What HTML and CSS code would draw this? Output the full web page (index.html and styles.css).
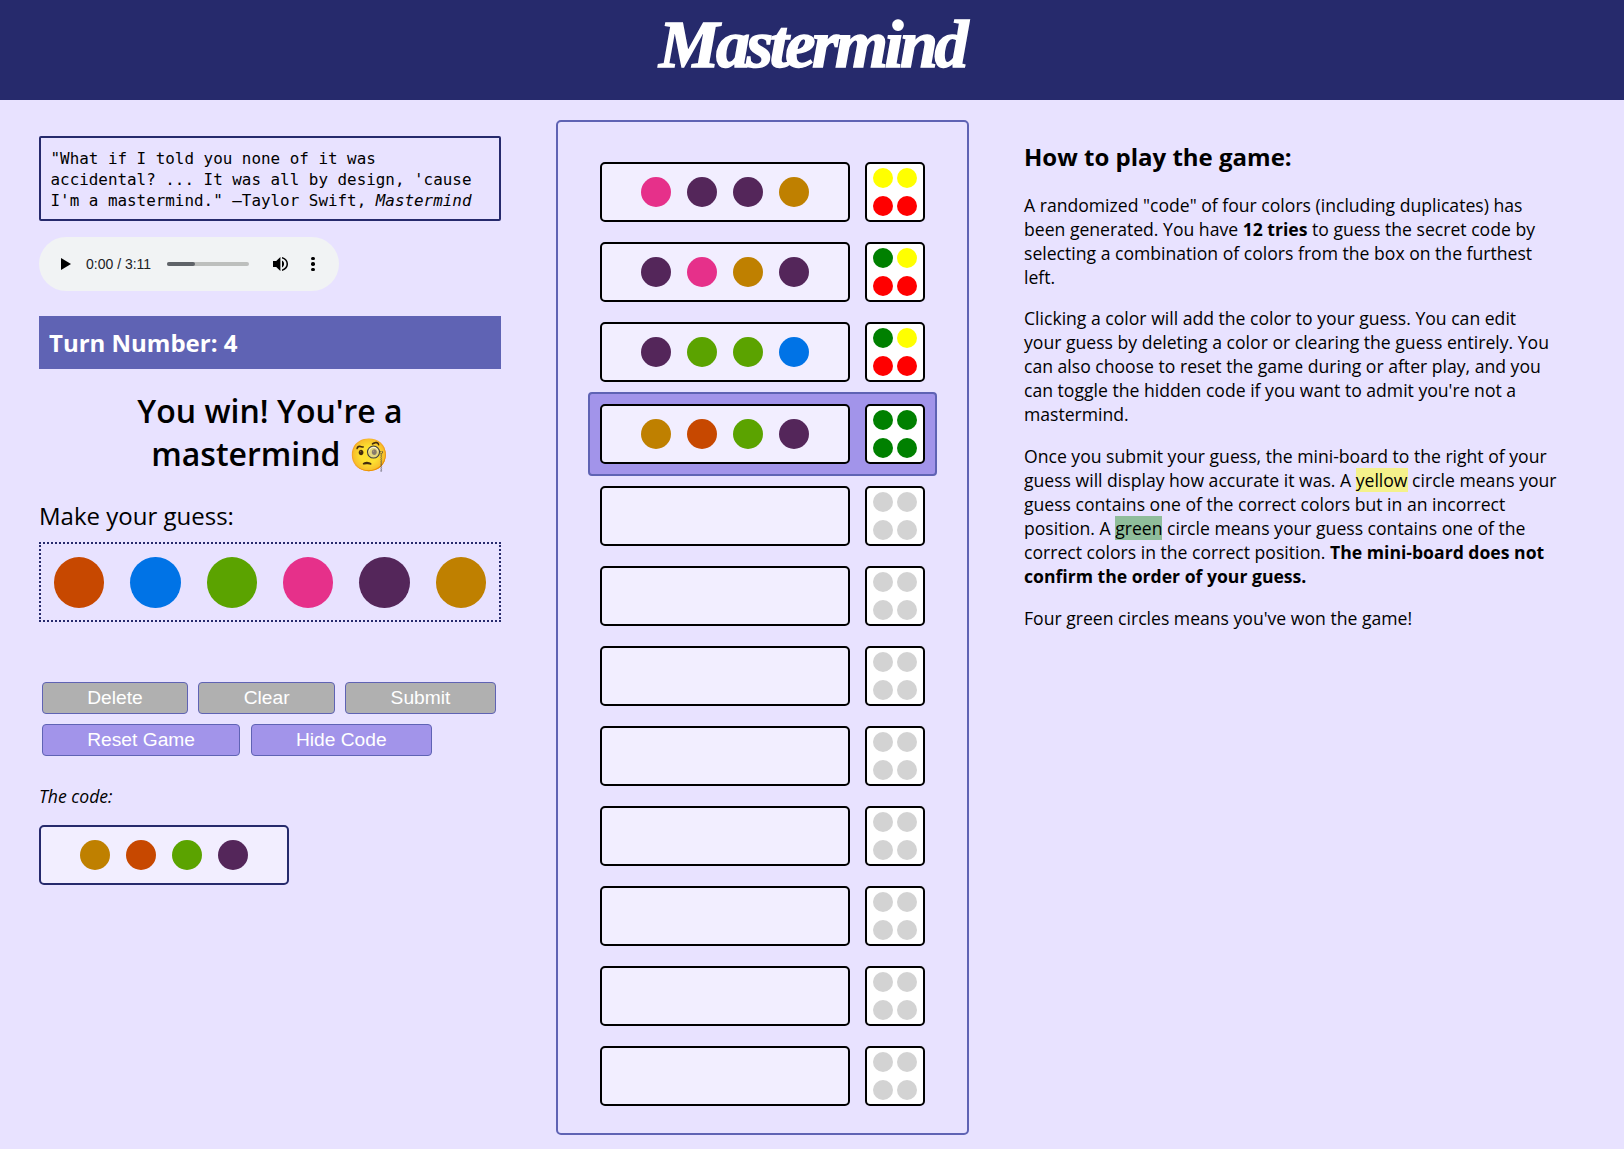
FILE: index.html
```html
<!DOCTYPE html>
<html lang="en">
<head>
  <meta charset="UTF-8">
  <title>Mastermind</title>
  <link rel="stylesheet" href="styles.css">
</head>
<body>
  <header class="top-bar">
    <h1 class="logo">Mastermind</h1>
  </header>

  <main class="layout">
    <section class="left-col">
      <p class="quote">"What if I told you none of it was accidental? ... It was all by design, 'cause I'm a mastermind." —Taylor Swift, <em>Mastermind</em></p>

      <div class="player">
        <svg class="play-icon" viewBox="0 0 10 12"><path d="M0 0 L10 6 L0 12 Z"/></svg>
        <span class="player-time">0:00 / 3:11</span>
        <div class="player-track"><div class="player-fill"></div></div>
        <svg class="volume-icon" viewBox="0 0 16 16"><path d="M0 5 H3.2 L7.4 1 V15 L3.2 11 H0 Z"/><path d="M9 4.6 C10.6 5.4 11 6.8 11 8 C11 9.2 10.6 10.6 9 11.4 Z"/><path d="M9 1 C12.6 1.8 15 4.6 15 8 C15 11.4 12.6 14.2 9 15 V13.4 C11.8 12.6 13.5 10.6 13.5 8 C13.5 5.4 11.8 3.4 9 2.6 Z"/></svg>
        <div class="player-menu"><i></i><i></i><i></i></div>
      </div>

      <div class="turn-bar">Turn Number: 4</div>
      <h2 class="win-msg">You win! You're a mastermind 🧐</h2>

      <div class="guess-label">Make your guess:</div>
      <div class="palette">
        <div class="swatch orange"></div>
        <div class="swatch blue"></div>
        <div class="swatch green"></div>
        <div class="swatch pink"></div>
        <div class="swatch purple"></div>
        <div class="swatch gold"></div>
      </div>

      <div class="buttons">
        <button class="btn btn-gray">Delete</button>
        <button class="btn btn-gray">Clear</button>
        <button class="btn btn-gray">Submit</button>
        <button class="btn btn-purple">Reset Game</button>
        <button class="btn btn-purple">Hide Code</button>
      </div>

      <p class="code-label">The code:</p>
      <div class="pegs code-board">
        <div class="peg gold"></div><div class="peg orange"></div><div class="peg green"></div><div class="peg purple"></div>
      </div>
    </section>

    <section class="board">
      <div class="row">
        <div class="pegs"><div class="peg pink"></div><div class="peg purple"></div><div class="peg purple"></div><div class="peg gold"></div></div>
        <div class="mini"><i class="hit-y"></i><i class="hit-y"></i><i class="hit-r"></i><i class="hit-r"></i></div>
      </div>
      <div class="row">
        <div class="pegs"><div class="peg purple"></div><div class="peg pink"></div><div class="peg gold"></div><div class="peg purple"></div></div>
        <div class="mini"><i class="hit-g"></i><i class="hit-y"></i><i class="hit-r"></i><i class="hit-r"></i></div>
      </div>
      <div class="row">
        <div class="pegs"><div class="peg purple"></div><div class="peg green"></div><div class="peg green"></div><div class="peg blue"></div></div>
        <div class="mini"><i class="hit-g"></i><i class="hit-y"></i><i class="hit-r"></i><i class="hit-r"></i></div>
      </div>
      <div class="row active">
        <div class="pegs"><div class="peg gold"></div><div class="peg orange"></div><div class="peg green"></div><div class="peg purple"></div></div>
        <div class="mini"><i class="hit-g"></i><i class="hit-g"></i><i class="hit-g"></i><i class="hit-g"></i></div>
      </div>
      <div class="row"><div class="pegs"></div><div class="mini"><i></i><i></i><i></i><i></i></div></div>
      <div class="row"><div class="pegs"></div><div class="mini"><i></i><i></i><i></i><i></i></div></div>
      <div class="row"><div class="pegs"></div><div class="mini"><i></i><i></i><i></i><i></i></div></div>
      <div class="row"><div class="pegs"></div><div class="mini"><i></i><i></i><i></i><i></i></div></div>
      <div class="row"><div class="pegs"></div><div class="mini"><i></i><i></i><i></i><i></i></div></div>
      <div class="row"><div class="pegs"></div><div class="mini"><i></i><i></i><i></i><i></i></div></div>
      <div class="row"><div class="pegs"></div><div class="mini"><i></i><i></i><i></i><i></i></div></div>
      <div class="row"><div class="pegs"></div><div class="mini"><i></i><i></i><i></i><i></i></div></div>
    </section>

    <section class="rules">
      <h2>How to play the game:</h2>
      <p>A randomized "code" of four colors (including duplicates) has been generated. You have <strong>12 tries</strong> to guess the secret code by selecting a combination of colors from the box on the furthest left.</p>
      <p>Clicking a color will add the color to your guess. You can edit your guess by deleting a color or clearing the guess entirely. You can also choose to reset the game during or after play, and you can toggle the hidden code if you want to admit you're not a mastermind.</p>
      <p>Once you submit your guess, the mini-board to the right of your guess will display how accurate it was. A <span class="mark-yellow">yellow</span> circle means your guess contains one of the correct colors but in an incorrect position. A <span class="mark-green">green</span> circle means your guess contains one of the correct colors in the correct position. <strong>The mini-board does not confirm the order of your guess.</strong></p>
      <p>Four green circles means you've won the game!</p>
    </section>
  </main>
</body>
</html>
```

FILE: styles.css
```css
* {
  box-sizing: border-box;
}

body {
  margin: 0;
  background-color: #e8e2ff;
  color: #000;
  font-family: "Open Sans", sans-serif;
}

.top-bar {
  height: 100px;
  background-color: #262a6c;
  display: flex;
  justify-content: center;
}

.logo {
  margin: 0;
  color: #fff;
  font-family: "Liberation Serif", serif;
  font-style: italic;
  font-weight: bold;
  font-size: 68px;
  letter-spacing: -3.4px;
  line-height: 88px;
  -webkit-text-stroke: 1.5px #fff;
}

.layout {
  display: flex;
  padding: 20px 0 14px 39px;
}

.left-col {
  width: 462px;
  margin-top: 16px;
}

.quote {
  margin: 0;
  padding: 10px 9.5px 8px;
  border: 2px solid #262a6c;
  border-radius: 2px;
  font-family: "DejaVu Sans Mono", monospace;
  font-size: 15.9px;
  line-height: 21px;
}

.player {
  width: 300px;
  height: 54px;
  margin-top: 16px;
  border-radius: 27px;
  background-color: #f1f3f4;
  display: flex;
  align-items: center;
  padding-left: 22px;
}

.play-icon {
  width: 10px;
  height: 12px;
}

.player-time {
  margin-left: 15px;
  width: 65px;
  font-family: "Liberation Sans", sans-serif;
  font-size: 14px;
  white-space: nowrap;
  color: #202124;
}

.player-track {
  width: 82px;
  height: 4px;
  margin-left: 16px;
  border-radius: 2px;
  background-color: #bdbfbd;
}

.player-fill {
  width: 28px;
  height: 100%;
  border-radius: 2px;
  background-color: #5f6368;
}

.volume-icon {
  width: 16px;
  height: 16px;
  margin-left: 24px;
}

.player-menu {
  display: flex;
  flex-direction: column;
  gap: 2px;
  margin-left: 22px;
}

.player-menu i {
  width: 3.5px;
  height: 3.5px;
  border-radius: 50%;
  background-color: #000;
}

.turn-bar {
  height: 53px;
  margin-top: 25px;
  padding-left: 10px;
  background-color: #5f63b4;
  color: #fff;
  font-size: 24px;
  font-weight: 700;
  line-height: 53px;
}

.win-msg {
  margin: 20px 0 0;
  text-align: center;
  font-size: 32px;
  font-weight: 600;
  line-height: 43px;
}

.guess-label {
  margin-top: 25px;
  font-size: 24px;
  line-height: 32px;
}

.palette {
  height: 80px;
  margin-top: 10px;
  border: 2px dotted #262a6c;
  display: flex;
  justify-content: space-around;
  align-items: center;
}

.swatch {
  width: 50.5px;
  height: 51px;
  border-radius: 50%;
}

.buttons {
  display: flex;
  flex-wrap: wrap;
  gap: 10px 10.5px;
  width: 462px;
  margin-top: 60px;
  padding-left: 3px;
}

.btn {
  height: 32px;
  padding: 0 44.25px;
  border: 1px solid #5f63b4;
  border-radius: 4px;
  color: #fff;
  font-family: "Liberation Sans", sans-serif;
  font-size: 19.2px;
}

.btn-gray {
  background-color: #b0b0b0;
}

.btn-purple {
  background-color: #a294ea;
}

.code-label {
  margin: 29px 0 0;
  font-size: 17.6px;
  font-style: italic;
  line-height: 22px;
}

.pegs {
  width: 250px;
  height: 60px;
  flex-shrink: 0;
  border: 2px solid #000;
  border-radius: 5px;
  background-color: #f2eeff;
  display: flex;
  justify-content: center;
  align-items: center;
  gap: 16px;
}

.code-board {
  margin-top: 18px;
  border-color: #262a6c;
}

.peg {
  width: 30px;
  height: 30px;
  border-radius: 50%;
}

.orange { background-color: #c74800; }
.blue { background-color: #0073e6; }
.green { background-color: #5ba300; }
.pink { background-color: #e6308a; }
.purple { background-color: #54265a; }
.gold { background-color: #bf8000; }

.board {
  display: flex;
  flex-direction: column;
  width: 413px;
  height: 1015px;
  margin-left: 55px;
  padding: 30px 30px 0;
  border: 2px solid #5f63b4;
  border-radius: 5px;
}

.row {
  display: flex;
  flex-shrink: 0;
  gap: 15px;
  margin: 10px 0;
  padding: 0 12px;
}

.row.active {
  margin: 0;
  padding: 10px;
  border: 2px solid #5f63b4;
  border-radius: 4px;
  background-color: #a294ea;
}

.mini {
  width: 60px;
  height: 60px;
  border: 2px solid #000;
  border-radius: 5px;
  background-color: #fff;
  display: grid;
  grid-template-columns: 20px 20px;
  grid-auto-rows: 20px;
  justify-content: center;
  align-content: center;
  gap: 8px 4px;
}

.mini i {
  border-radius: 50%;
  background-color: #d3d3d3;
}

.mini .hit-y { background-color: #ffff00; }
.mini .hit-r { background-color: #ff0000; }
.mini .hit-g { background-color: #008000; }

.rules {
  width: 532.8px;
  margin-left: 55px;
  margin-top: 21px;
  font-size: 17.6px;
  line-height: 24px;
}

.rules h2 {
  margin: 0 0 19.6px;
  font-size: 24px;
  line-height: 32px;
}

.rules p {
  margin: 0 0 17.7px;
}

.mark-yellow {
  background-color: #f4f18b;
}

.mark-green {
  background-color: #8fbd9b;
}
```
